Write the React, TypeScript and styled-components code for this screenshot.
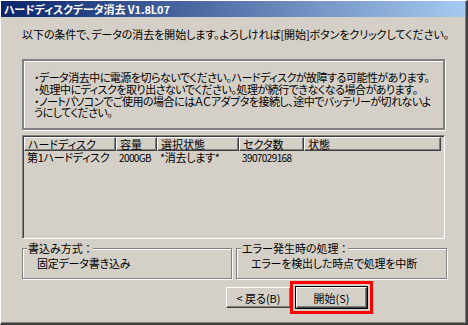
import React from 'react'
import styled, { createGlobalStyle } from 'styled-components'

const GlobalStyle = createGlobalStyle`
body {
  margin: 0;
  background: #d4d0c8;
  font-family: "Noto Sans CJK JP", "Noto Sans", sans-serif;
}
`

const Window = styled.div`
width: 468px;
height: 325px;
box-sizing: border-box;
background: #d4d0c8;
border-top: 1px solid #ffffff;
border-left: 1px solid #ffffff;
border-right: 2px solid #404040;
border-bottom: 2px solid #404040;
box-shadow: inset -1px -1px 0 #808080;
display: flex;
flex-direction: column;
color: #000;
font-size: 11px;
font-feature-settings: "palt";
`

const TitleBar = styled.div`
height: 16px;
margin: 0 1px 0 0;
padding-left: 3px;
display: flex;
align-items: center;
background: linear-gradient(to right, #0a246a, #a6caf0);
color: #fff;
font-weight: bold;
font-size: 11px;
letter-spacing: -0.1px;
`

const Content = styled.div`
padding: 0 21px 0 21px;
display: flex;
flex-direction: column;
`

const Intro = styled.p`
margin: 10px 0 0 0;
line-height: 14px;
font-size: 11px;
letter-spacing: -0.08px;
white-space: nowrap;
`

const Notice = styled.div`
margin-top: 18px;
height: 71px;
box-sizing: border-box;
border: 2px solid #808080;
box-shadow: 1px 1px 0 #ffffff, inset 1px 1px 0 #ffffff;
padding: 10px 10px 0 10px;
`

const NoticeLine = styled.div`
line-height: 12px;
font-size: 11px;
letter-spacing: -0.5px;
white-space: nowrap;
`

const Wrapped = styled.div`
line-height: 11px;
margin-top: 1px;
font-size: 11px;
letter-spacing: -0.5px;
white-space: nowrap;
`

const ListView = styled.div`
margin-top: 5px;
height: 104px;
box-sizing: border-box;
border-top: 1px solid #808080;
border-left: 1px solid #808080;
border-right: 1px solid #ffffff;
border-bottom: 1px solid #ffffff;
box-shadow: inset 1px 1px 0 #404040;
padding: 1px 3px 0 1px;
display: flex;
flex-direction: column;
`

const columns = '92px 41px 82px 65px 1fr'

const HeaderRow = styled.div`
display: grid;
grid-template-columns: ${columns};
height: 14px;
`

const HeaderCell = styled.div`
border-top: 1px solid #ffffff;
border-left: 1px solid #ffffff;
border-right: 1px solid #404040;
border-bottom: 1px solid #404040;
box-shadow: inset -1px -1px 0 #808080;
padding-left: 3px;
font-size: 11px;
line-height: 12px;
overflow: hidden;
white-space: nowrap;
`

const DataRow = styled.div`
display: grid;
grid-template-columns: ${columns};
height: 13px;
line-height: 13px;
`

const DataCell = styled.div<{ $condensed?: boolean }>`
padding-left: 3px;
font-size: ${(p) => (p.$condensed ? '10px' : '11px')};
letter-spacing: ${(p) => (p.$condensed ? '-0.6px' : '-0.3px')};
white-space: nowrap;
`

const Groups = styled.div`
margin-top: 9px;
display: grid;
grid-template-columns: 210px 211px;
gap: 4px;
`

const GroupBox = styled.fieldset<{ $indent: number }>`
margin: 0;
height: 31px;
box-sizing: border-box;
border: 1px solid #808080;
box-shadow: 1px 1px 0 #ffffff, inset 1px 1px 0 #ffffff;
padding: 0 0 0 ${(p) => p.$indent}px;
position: relative;
`

const Legend = styled.legend`
position: absolute;
top: -8px;
left: 4px;
padding: 0 2px 0 1px;
background: #d4d0c8;
font-size: 11px;
line-height: 14px;
white-space: nowrap;
`

const GroupText = styled.div`
margin-top: 7px;
font-size: 11px;
line-height: 14px;
letter-spacing: -0.2px;
white-space: nowrap;
`

const ButtonRow = styled.div`
margin-top: 8px;
display: flex;
justify-content: flex-end;
gap: 5px;
padding-right: 78px;
`

const Button = styled.button<{ $default?: boolean }>`
width: ${(p) => (p.$default ? '71px' : '65px')};
height: 21px;
box-sizing: border-box;
margin: 0;
padding: 0;
background: #d4d0c8;
font-family: inherit;
font-size: 11px;
font-feature-settings: "palt";
color: #000;
border-top: 1px solid #ffffff;
border-left: 1px solid #ffffff;
border-right: 1px solid #404040;
border-bottom: 1px solid #404040;
box-shadow: ${(p) =>
  p.$default
    ? '0 0 0 1px #000, inset -1px -1px 0 #808080'
    : 'inset -1px -1px 0 #808080'};
`

const Highlight = styled.span`
display: inline-flex;
outline: 3px solid #ff0000;
outline-offset: 3px;
`

export default function App() {
  return (
    <>
      <GlobalStyle />
      <Window>
        <TitleBar>ハードディスクデータ消去 V1.8L07</TitleBar>
        <Content>
          <Intro>
            以下の条件で、データの消去を開始します。よろしければ[開始]ボタンをクリックしてください。
          </Intro>
          <Notice>
            <NoticeLine>・データ消去中に電源を切らないでください。ハードディスクが故障する可能性があります。</NoticeLine>
            <NoticeLine>・処理中にディスクを取り出さないでください。処理が続行できなくなる場合があります。</NoticeLine>
            <Wrapped>
              ・ノートパソコンでご使用の場合にはＡＣアダプタを接続し、途中でバッテリーが切れないよ
              <br />
              うにしてください。
            </Wrapped>
          </Notice>
          <ListView>
            <HeaderRow>
              <HeaderCell>ハードディスク</HeaderCell>
              <HeaderCell>容量</HeaderCell>
              <HeaderCell>選択状態</HeaderCell>
              <HeaderCell>セクタ数</HeaderCell>
              <HeaderCell>状態</HeaderCell>
            </HeaderRow>
            <DataRow>
              <DataCell>第1ハードディスク</DataCell>
              <DataCell $condensed>2000GB</DataCell>
              <DataCell>*消去します*</DataCell>
              <DataCell $condensed>3907029168</DataCell>
              <DataCell></DataCell>
            </DataRow>
          </ListView>
          <Groups>
            <GroupBox $indent={14}>
              <Legend>書込み方式 ：</Legend>
              <GroupText>固定データ書き込み</GroupText>
            </GroupBox>
            <GroupBox $indent={14}>
              <Legend>エラー発生時の処理 ：</Legend>
              <GroupText>エラーを検出した時点で処理を中断</GroupText>
            </GroupBox>
          </Groups>
          <ButtonRow>
            <Button>&lt; 戻る(B)</Button>
            <Highlight>
              <Button $default>開始(S)</Button>
            </Highlight>
          </ButtonRow>
        </Content>
      </Window>
    </>
  )
}
